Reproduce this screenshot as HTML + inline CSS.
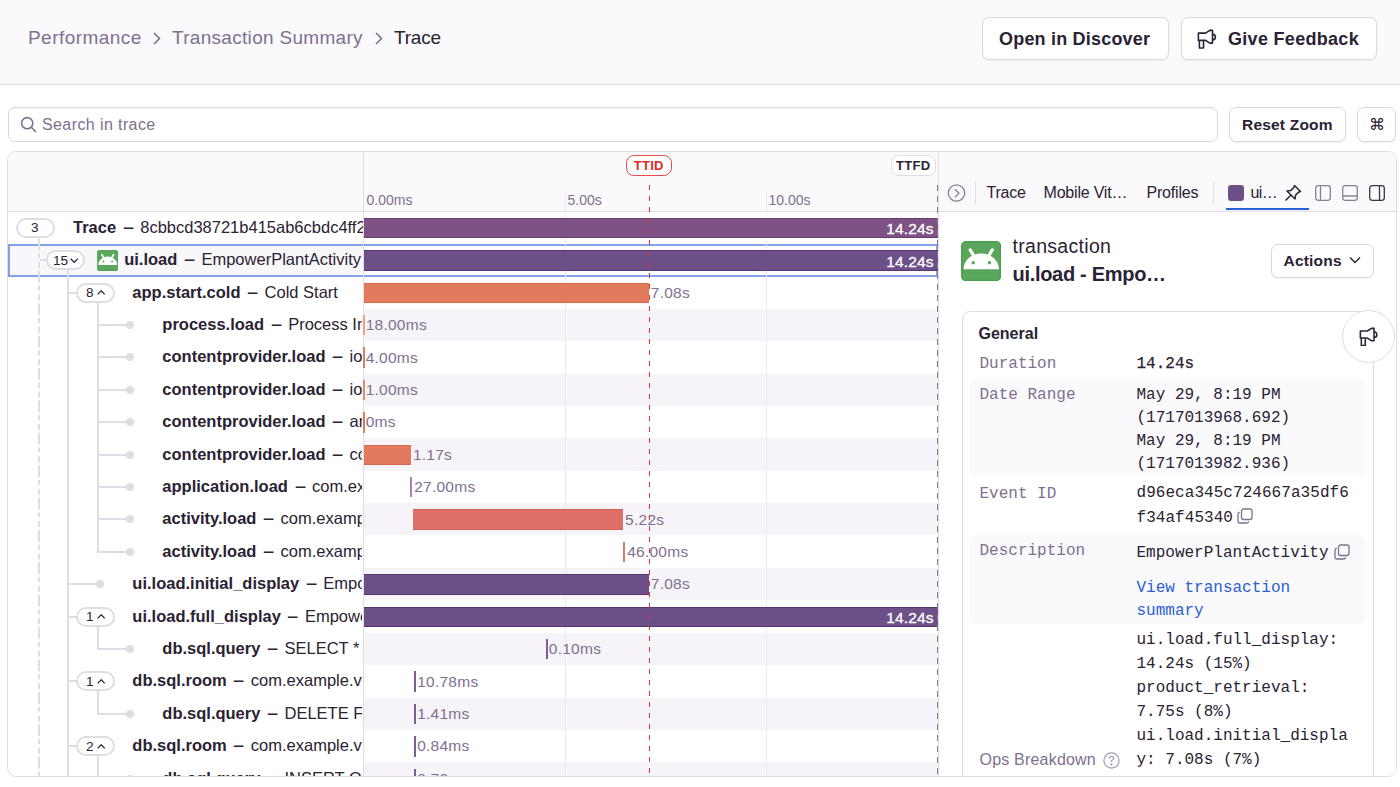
<!DOCTYPE html><html><head><meta charset="utf-8"><style>
*{box-sizing:border-box}
html,body{margin:0;padding:0;width:1400px;height:787px;overflow:hidden;background:#fff;font-family:"Liberation Sans", sans-serif;color:#2B2233}
.a{position:absolute}
.t{position:absolute;white-space:nowrap;line-height:1}
.btn{position:absolute;background:#fff;border:1px solid #DBD6E1;border-radius:7px;box-shadow:0 1px 1px rgba(43,34,51,0.06)}
.badge{position:absolute;height:20px;border:2px solid #E0DCE5;border-radius:10px;background:#fff;font-size:15px;line-height:16px;color:#2B2233}
.vl{position:absolute;width:2px;background:#E0DCE5}
.hl{position:absolute;height:2px;background:#E0DCE5}
.dot{position:absolute;width:8px;height:8px;border-radius:4px;background:#E0DCE5}
.lbl{position:absolute;white-space:nowrap;line-height:1;font-size:15.5px;letter-spacing:0.25px;color:#80708F}
.mono{font-family:"Liberation Mono", monospace}
.dash{display:inline-block;margin:0 7.3px 0 7.6px;transform:translateY(-0.7px) scale(1.06,1.3)}
</style></head><body><div class="a" style="left:0;top:0;width:1400px;height:85px;background:#FAF9FB;border-bottom:1px solid #E0DCE5"></div>
<div class="t" style="left:28px;top:28.3px;font-size:19px;letter-spacing:0.3px;color:#80708F;letter-spacing:0.45px">Performance</div>
<svg class="a" style="left:152px;top:32px" width="10" height="13" viewBox="0 0 10 13" fill="none" stroke="#80708F" stroke-width="1.6"><path d="M2 1L7.5 6.5L2 12"/></svg>
<div class="t" style="left:172px;top:28.3px;font-size:19px;letter-spacing:0.3px;color:#80708F">Transaction Summary</div>
<svg class="a" style="left:374px;top:32px" width="10" height="13" viewBox="0 0 10 13" fill="none" stroke="#80708F" stroke-width="1.6"><path d="M2 1L7.5 6.5L2 12"/></svg>
<div class="t" style="left:394px;top:28.3px;font-size:19px;letter-spacing:-0.2px;color:#2B2233">Trace</div>
<div class="btn" style="left:982px;top:17px;width:187px;height:43px"></div>
<div class="t" style="left:999px;top:30px;font-size:18px;font-weight:bold;letter-spacing:0.2px;color:#2B2233">Open in Discover</div>
<div class="btn" style="left:1181px;top:17px;width:196px;height:43px"></div>
<svg style="position:absolute;left:1197px;top:28.8px" width="20.0" height="20.0" viewBox="0 0 20 20" fill="none" stroke="#2B2233" stroke-width="1.6" stroke-linejoin="round"><path d="M1.4 4.1H8.6L12.8 1.4H15.5V14.1H12.8L8.6 11.4H1.4Z M2.4 11.4V19H6.5V11.4 M15.5 5A2.9 2.9 0 0 1 15.5 10.8"/></svg>
<div class="t" style="left:1228px;top:30px;font-size:18px;font-weight:bold;letter-spacing:0.3px;color:#2B2233">Give Feedback</div>
<div class="btn" style="left:8px;top:107px;width:1210px;height:35px;box-shadow:inset 0 1px 2px rgba(43,34,51,0.04)"></div>
<svg class="a" style="left:20px;top:116px" width="18" height="18" viewBox="0 0 18 18" fill="none" stroke="#80708F" stroke-width="1.6"><circle cx="7.2" cy="7.2" r="5.6"/><path d="M11.3 11.3L16 16"/></svg>
<div class="t" style="left:42px;top:116.7px;font-size:16px;color:#80708F;letter-spacing:0.4px">Search in trace</div>
<div class="btn" style="left:1229px;top:107px;width:117px;height:35px"></div>
<div class="t" style="left:1242px;top:117.2px;font-size:15.5px;letter-spacing:-0.15px;font-weight:bold;letter-spacing:0.2px;color:#2B2233">Reset Zoom</div>
<div class="btn" style="left:1357px;top:107px;width:39px;height:35px"></div>
<div class="t" style="left:1368.5px;top:116.5px;font-size:16px;color:#2B2233">&#8984;</div>
<div class="a" style="left:7px;top:151px;width:1390px;height:626px;border:1.5px solid #E0DCE5;border-radius:9px;overflow:hidden;background:#fff">
<div class="a" style="left:-8.5px;top:-152.5px;width:1400px;height:787px">
<div class="a" style="left:0;top:152px;width:1400px;height:60px;background:#FAF9FB;border-bottom:1.5px solid #E0DCE5"></div>
<div class="a" style="left:364px;top:244.4px;width:574px;height:32.4px;background:#F6F4F8"></div>
<div class="a" style="left:364px;top:309.2px;width:574px;height:32.4px;background:#F6F4F8"></div>
<div class="a" style="left:364px;top:374.0px;width:574px;height:32.4px;background:#F6F4F8"></div>
<div class="a" style="left:364px;top:438.79999999999995px;width:574px;height:32.4px;background:#F6F4F8"></div>
<div class="a" style="left:364px;top:503.59999999999997px;width:574px;height:32.4px;background:#F6F4F8"></div>
<div class="a" style="left:364px;top:568.4px;width:574px;height:32.4px;background:#F6F4F8"></div>
<div class="a" style="left:364px;top:633.2px;width:574px;height:32.4px;background:#F6F4F8"></div>
<div class="a" style="left:364px;top:698.0px;width:574px;height:32.4px;background:#F6F4F8"></div>
<div class="a" style="left:364px;top:762.8px;width:574px;height:32.4px;background:#F6F4F8"></div>
<div class="a" style="left:8px;top:244px;width:930.5px;height:33px;background:#fff;border:2px solid #84A1E8;"></div>
<div class="a" style="left:10px;top:246px;width:353.5px;height:29px;background:#F8F7FA"></div>
<div class="a" style="left:565px;top:192px;width:1px;height:600px;background:#ECE9F0"></div>
<div class="a" style="left:766.5px;top:192px;width:1px;height:600px;background:#ECE9F0"></div>
<div class="a" style="left:363px;top:152px;width:1.5px;height:640px;background:#E0DCE5"></div>
<div class="t" style="left:367px;top:193px;font-size:14px;color:#80708F">0.00ms</div>
<div class="t" style="left:568px;top:193px;font-size:14px;color:#80708F">5.00s</div>
<div class="t" style="left:769px;top:193px;font-size:14px;color:#80708F">10.00s</div>
<div class="a" style="left:38px;top:238px;width:2.4px;height:560px;background:repeating-linear-gradient(to bottom,#E0DCE5 0,#E0DCE5 5.4px,transparent 5.4px,transparent 8.8px,#E0DCE5 8.8px,#E0DCE5 14.2px,transparent 14.2px,transparent 18px,#E0DCE5 18px,#E0DCE5 23.3px,transparent 23.3px,transparent 26.8px,#E0DCE5 26.8px,#E0DCE5 32.4px);background-size:2.4px 32.4px;background-position:0 -26px"></div>
<div class="hl" style="left:40px;top:259.6px;width:7px"></div>
<div class="vl" style="left:67.7px;top:270px;height:520px"></div>
<div class="vl" style="left:97.4px;top:302px;height:251.20000000000005px"></div>
<div class="vl" style="left:97.4px;top:626px;height:24.40000000000009px"></div>
<div class="vl" style="left:97.4px;top:690.8px;height:24.40000000000009px"></div>
<div class="vl" style="left:97.4px;top:755.6px;height:80px"></div>
<div class="hl" style="left:68px;top:292.0px;width:10px"></div>
<div class="hl" style="left:98px;top:324.4px;width:32px"></div>
<div class="dot" style="left:126.7px;top:321.4px"></div>
<div class="hl" style="left:98px;top:356.8px;width:32px"></div>
<div class="dot" style="left:126.7px;top:353.8px"></div>
<div class="hl" style="left:98px;top:389.2px;width:32px"></div>
<div class="dot" style="left:126.7px;top:386.2px"></div>
<div class="hl" style="left:98px;top:421.59999999999997px;width:32px"></div>
<div class="dot" style="left:126.7px;top:418.59999999999997px"></div>
<div class="hl" style="left:98px;top:453.99999999999994px;width:32px"></div>
<div class="dot" style="left:126.7px;top:450.99999999999994px"></div>
<div class="hl" style="left:98px;top:486.4px;width:32px"></div>
<div class="dot" style="left:126.7px;top:483.4px"></div>
<div class="hl" style="left:98px;top:518.8px;width:32px"></div>
<div class="dot" style="left:126.7px;top:515.8px"></div>
<div class="hl" style="left:98px;top:551.2px;width:32px"></div>
<div class="dot" style="left:126.7px;top:548.2px"></div>
<div class="hl" style="left:68px;top:583.6px;width:32px"></div>
<div class="dot" style="left:96.8px;top:580.6px"></div>
<div class="hl" style="left:68px;top:616.0px;width:10px"></div>
<div class="hl" style="left:98px;top:648.4000000000001px;width:32px"></div>
<div class="dot" style="left:126.7px;top:645.4000000000001px"></div>
<div class="hl" style="left:68px;top:680.8px;width:10px"></div>
<div class="hl" style="left:98px;top:713.2px;width:32px"></div>
<div class="dot" style="left:126.7px;top:710.2px"></div>
<div class="hl" style="left:68px;top:745.6px;width:10px"></div>
<div class="hl" style="left:98px;top:778.0px;width:32px"></div>
<div class="dot" style="left:126.7px;top:775.0px"></div>
<div class="badge" style="left:16.7px;top:218.2px;width:39px"></div>
<div class="t" style="left:31.6px;top:221.6px;font-size:13.6px;color:#2B2233">3</div>
<div class="a" style="left:73.5px;top:218.2px;width:289.5px;height:21px;overflow:hidden;white-space:nowrap;font-size:16.5px;line-height:18px;color:#2B2233"><b>Trace</b><span class="dash">–</span>8cbbcd38721b415ab6cbdc4ff2e1a3b9</div>
<div class="badge" style="left:46.5px;top:250.60000000000002px;width:38.5px"></div>
<div class="t" style="left:53.5px;top:254.00000000000003px;font-size:13.6px;color:#2B2233">15</div>
<svg class="a" style="left:70px;top:258.5px" width="8.4" height="5.2" viewBox="0 0 8.4 5.2" fill="none" stroke="#2B2233" stroke-width="1.25"><path d="M0.7 0.8L4.2 4.4L7.7 0.8"/></svg>
<svg style="position:absolute;left:97.3px;top:250.20000000000002px" width="21.3" height="21.3" viewBox="0 0 40 40"><rect x="0.7" y="0.7" width="38.6" height="38.6" rx="4.2" fill="#5AA65C" stroke="#48A04B" stroke-width="1.4"/><path d="M2.5 28A17.65 15.6 0 0 1 37.8 28Z" fill="#fff"/><path d="M9.2 8.9L12.6 14.6M31.1 8.9L27.7 14.6" stroke="#fff" stroke-width="3.2" stroke-linecap="round"/><circle cx="12.1" cy="21.6" r="1.7" fill="#5AA65C"/><circle cx="28.3" cy="21.6" r="1.7" fill="#5AA65C"/></svg>
<div class="a" style="left:124.7px;top:250.60000000000002px;width:238.3px;height:21px;overflow:hidden;white-space:nowrap;font-size:16.5px;line-height:18px;color:#2B2233"><b>ui.load</b><span class="dash">–</span>EmpowerPlantActivity</div>
<div class="badge" style="left:76.5px;top:283.0px;width:38.5px"></div>
<div class="t" style="left:86.4px;top:286.4px;font-size:13.6px;color:#2B2233">8</div>
<svg class="a" style="left:97px;top:290.8px" width="8.4" height="5.2" viewBox="0 0 8.4 5.2" fill="none" stroke="#2B2233" stroke-width="1.25"><path d="M0.7 4.4L4.2 0.8L7.7 4.4"/></svg>
<div class="a" style="left:132.8px;top:283.0px;width:230.2px;height:21px;overflow:hidden;white-space:nowrap;font-size:16.5px;line-height:18px;color:#2B2233"><b>app.start.cold</b><span class="dash">–</span>Cold Start</div>
<div class="a" style="left:162.8px;top:315.4px;width:200.2px;height:21px;overflow:hidden;white-space:nowrap;font-size:16.5px;line-height:18px;color:#2B2233"><b>process.load</b><span class="dash">–</span>Process Initialization</div>
<div class="a" style="left:162.8px;top:347.8px;width:200.2px;height:21px;overflow:hidden;white-space:nowrap;font-size:16.5px;line-height:18px;color:#2B2233"><b>contentprovider.load</b><span class="dash">–</span>io.sentry.android.core.SentryInitProvider</div>
<div class="a" style="left:162.8px;top:380.2px;width:200.2px;height:21px;overflow:hidden;white-space:nowrap;font-size:16.5px;line-height:18px;color:#2B2233"><b>contentprovider.load</b><span class="dash">–</span>io.sentry.android.core.SentryPerformanceProvider</div>
<div class="a" style="left:162.8px;top:412.59999999999997px;width:200.2px;height:21px;overflow:hidden;white-space:nowrap;font-size:16.5px;line-height:18px;color:#2B2233"><b>contentprovider.load</b><span class="dash">–</span>androidx.startup.InitializationProvider</div>
<div class="a" style="left:162.8px;top:444.99999999999994px;width:200.2px;height:21px;overflow:hidden;white-space:nowrap;font-size:16.5px;line-height:18px;color:#2B2233"><b>contentprovider.load</b><span class="dash">–</span>com.example.vu.android.ContentProvider</div>
<div class="a" style="left:162.8px;top:477.4px;width:200.2px;height:21px;overflow:hidden;white-space:nowrap;font-size:16.5px;line-height:18px;color:#2B2233"><b>application.load</b><span class="dash">–</span>com.example.vu.android.MyApplication</div>
<div class="a" style="left:162.8px;top:509.79999999999995px;width:200.2px;height:21px;overflow:hidden;white-space:nowrap;font-size:16.5px;line-height:18px;color:#2B2233"><b>activity.load</b><span class="dash">–</span>com.example.vu.android.MainActivity</div>
<div class="a" style="left:162.8px;top:542.2px;width:200.2px;height:21px;overflow:hidden;white-space:nowrap;font-size:16.5px;line-height:18px;color:#2B2233"><b>activity.load</b><span class="dash">–</span>com.example.vu.android.EmpowerPlantActivity</div>
<div class="a" style="left:132.8px;top:574.6px;width:230.2px;height:21px;overflow:hidden;white-space:nowrap;font-size:16.5px;line-height:18px;color:#2B2233"><b>ui.load.initial_display</b><span class="dash">–</span>EmpowerPlantActivity</div>
<div class="badge" style="left:76.5px;top:607.0px;width:38.5px"></div>
<div class="t" style="left:86.4px;top:610.4px;font-size:13.6px;color:#2B2233">1</div>
<svg class="a" style="left:97px;top:614.8px" width="8.4" height="5.2" viewBox="0 0 8.4 5.2" fill="none" stroke="#2B2233" stroke-width="1.25"><path d="M0.7 4.4L4.2 0.8L7.7 4.4"/></svg>
<div class="a" style="left:132.8px;top:607.0px;width:230.2px;height:21px;overflow:hidden;white-space:nowrap;font-size:16.5px;line-height:18px;color:#2B2233"><b>ui.load.full_display</b><span class="dash">–</span>EmpowerPlantActivity</div>
<div class="a" style="left:162.8px;top:639.4000000000001px;width:200.2px;height:21px;overflow:hidden;white-space:nowrap;font-size:16.5px;line-height:18px;color:#2B2233"><b>db.sql.query</b><span class="dash">–</span>SELECT * FROM products</div>
<div class="badge" style="left:76.5px;top:671.8px;width:38.5px"></div>
<div class="t" style="left:86.4px;top:675.1999999999999px;font-size:13.6px;color:#2B2233">1</div>
<svg class="a" style="left:97px;top:679.5999999999999px" width="8.4" height="5.2" viewBox="0 0 8.4 5.2" fill="none" stroke="#2B2233" stroke-width="1.25"><path d="M0.7 4.4L4.2 0.8L7.7 4.4"/></svg>
<div class="a" style="left:132.8px;top:671.8px;width:230.2px;height:21px;overflow:hidden;white-space:nowrap;font-size:16.5px;line-height:18px;color:#2B2233"><b>db.sql.room</b><span class="dash">–</span>com.example.vu.android.db.dao</div>
<div class="a" style="left:162.8px;top:704.2px;width:200.2px;height:21px;overflow:hidden;white-space:nowrap;font-size:16.5px;line-height:18px;color:#2B2233"><b>db.sql.query</b><span class="dash">–</span>DELETE FROM products</div>
<div class="badge" style="left:76.5px;top:736.6px;width:38.5px"></div>
<div class="t" style="left:86.4px;top:740.0px;font-size:13.6px;color:#2B2233">2</div>
<svg class="a" style="left:97px;top:744.4px" width="8.4" height="5.2" viewBox="0 0 8.4 5.2" fill="none" stroke="#2B2233" stroke-width="1.25"><path d="M0.7 4.4L4.2 0.8L7.7 4.4"/></svg>
<div class="a" style="left:132.8px;top:736.6px;width:230.2px;height:21px;overflow:hidden;white-space:nowrap;font-size:16.5px;line-height:18px;color:#2B2233"><b>db.sql.room</b><span class="dash">–</span>com.example.vu.android.db.dao</div>
<div class="a" style="left:162.8px;top:769.0px;width:200.2px;height:21px;overflow:hidden;white-space:nowrap;font-size:16.5px;line-height:18px;color:#2B2233"><b>db.sql.query</b><span class="dash">–</span>INSERT OR REPLACE INTO products</div>
<div class="a" style="left:364px;top:218.2px;width:574px;height:20.6px;background:#7F5286;border-top:1px solid #6A3C76;border-bottom:1px solid #6A3C76"></div>
<div class="t" style="left:364px;top:221.6px;width:570px;text-align:right;font-size:15.5px;letter-spacing:0.1px;color:#fff;-webkit-text-stroke:0.3px #fff">14.24s</div>
<div class="a" style="left:364px;top:250.60000000000002px;width:574px;height:20.6px;background:#6D5088;border-top:1px solid #563672;border-bottom:1px solid #563672"></div>
<div class="t" style="left:364px;top:254.00000000000003px;width:570px;text-align:right;font-size:15.5px;letter-spacing:0.1px;color:#fff;-webkit-text-stroke:0.3px #fff">14.24s</div>
<div class="a" style="left:364px;top:283.0px;width:285.5px;height:20.6px;background:#E27B5D;border-top:1px solid #D56A4C;border-bottom:1px solid #D56A4C"></div>
<div class="lbl" style="left:651.3000000000001px;top:285.2px">7.08s</div>
<div class="a" style="left:363.5px;top:315.4px;width:1.8px;height:20.6px;background:#E9A08C"></div>
<div class="lbl" style="left:366.20000000000005px;top:317.59999999999997px">18.00ms</div>
<div class="a" style="left:363.5px;top:347.8px;width:1.8px;height:20.6px;background:#E47A5C"></div>
<div class="lbl" style="left:366.20000000000005px;top:350.0px">4.00ms</div>
<div class="a" style="left:363.5px;top:380.2px;width:1.8px;height:20.6px;background:#E58A6E"></div>
<div class="lbl" style="left:366.20000000000005px;top:382.4px">1.00ms</div>
<div class="a" style="left:363.5px;top:412.59999999999997px;width:1.8px;height:20.6px;background:#E47A5C"></div>
<div class="lbl" style="left:366.20000000000005px;top:414.79999999999995px">0ms</div>
<div class="a" style="left:364px;top:444.99999999999994px;width:47px;height:20.6px;background:#E27B5D;border-top:1px solid #D56A4C;border-bottom:1px solid #D56A4C"></div>
<div class="lbl" style="left:413.40000000000003px;top:447.19999999999993px">1.17s</div>
<div class="a" style="left:410.5px;top:477.4px;width:1.8px;height:20.6px;background:#A084AE"></div>
<div class="lbl" style="left:414.70000000000005px;top:479.59999999999997px">27.00ms</div>
<div class="a" style="left:413.2px;top:509.79999999999995px;width:210.3px;height:20.6px;background:#DE6F66;border-top:1px solid #D05E55;border-bottom:1px solid #D05E55"></div>
<div class="lbl" style="left:625.6px;top:511.99999999999994px">5.22s</div>
<div class="a" style="left:623.5px;top:542.2px;width:1.8px;height:20.6px;background:#E07A70"></div>
<div class="lbl" style="left:627.7px;top:544.4000000000001px">46.00ms</div>
<div class="a" style="left:364px;top:574.6px;width:285.5px;height:20.6px;background:#6D5088;border-top:1px solid #563672;border-bottom:1px solid #563672"></div>
<div class="lbl" style="left:651.3000000000001px;top:576.8000000000001px">7.08s</div>
<div class="a" style="left:364px;top:607.0px;width:574px;height:20.6px;background:#6D5088;border-top:1px solid #563672;border-bottom:1px solid #563672"></div>
<div class="t" style="left:364px;top:610.4px;width:570px;text-align:right;font-size:15.5px;letter-spacing:0.1px;color:#fff;-webkit-text-stroke:0.3px #fff">14.24s</div>
<div class="a" style="left:546.5px;top:639.4000000000001px;width:1.8px;height:20.6px;background:#7E5E96"></div>
<div class="lbl" style="left:549.3000000000001px;top:641.6000000000001px">0.10ms</div>
<div class="a" style="left:414.8px;top:671.8px;width:1.8px;height:20.6px;background:#7E5E96"></div>
<div class="lbl" style="left:417.70000000000005px;top:674.0px">10.78ms</div>
<div class="a" style="left:414.8px;top:704.2px;width:1.8px;height:20.6px;background:#7E5E96"></div>
<div class="lbl" style="left:417.70000000000005px;top:706.4000000000001px">1.41ms</div>
<div class="a" style="left:414.8px;top:736.6px;width:1.8px;height:20.6px;background:#7E5E96"></div>
<div class="lbl" style="left:417.70000000000005px;top:738.8000000000001px">0.84ms</div>
<div class="a" style="left:414.8px;top:769.0px;width:1.8px;height:20.6px;background:#7E5E96"></div>
<div class="lbl" style="left:417.70000000000005px;top:771.2px">0.70ms</div>
<div class="a" style="left:649px;top:185px;width:1.3px;height:620px;background:repeating-linear-gradient(to bottom,#E0352B 0,#E0352B 5px,transparent 5px,transparent 11px)"></div>
<div class="a" style="left:626.5px;top:155.2px;width:45.5px;height:21.5px;border:1.5px solid #E4514C;border-radius:8px;background:#fff"></div>
<div class="t" style="left:626.5px;top:159.8px;width:45.5px;text-align:center;font-size:13px;font-weight:bold;letter-spacing:0.3px;color:#DD2C25">TTID</div>
<div class="a" style="left:937px;top:185px;width:1.6px;height:620px;background:repeating-linear-gradient(to bottom,#857A90 0,#857A90 6px,transparent 6px,transparent 11px)"></div>
<div class="a" style="left:891.5px;top:155.5px;width:44.5px;height:21px;border:1.5px solid #E0DCE5;border-radius:8px;background:#fff"></div>
<div class="t" style="left:891.5px;top:159.8px;width:44.5px;text-align:center;font-size:13px;font-weight:bold;letter-spacing:0.3px;color:#2B2233">TTFD</div>
<div class="a" style="left:938px;top:152px;width:1.5px;height:640px;background:#E0DCE5"></div>
<div class="a" style="left:939.5px;top:152px;width:460px;height:60px;background:#FAF9FB;border-bottom:1.5px solid #E0DCE5"></div>
<div class="a" style="left:939.5px;top:212px;width:460px;height:600px;background:#fff"></div>
<svg class="a" style="left:947px;top:183px" width="20" height="20" viewBox="0 0 20 20" fill="none" stroke="#8B7F96" stroke-width="1.3"><circle cx="9.5" cy="10" r="8.2"/><path d="M8 6.2L11.9 10.3L8 14.4"/></svg>
<div class="a" style="left:975px;top:182px;width:1.2px;height:22px;background:#E0DCE5"></div>
<div class="t" style="left:987px;top:185px;font-size:16px;color:#2B2233;letter-spacing:-0.2px">Trace</div>
<div class="t" style="left:1044px;top:185px;font-size:16px;color:#2B2233;letter-spacing:-0.2px">Mobile Vit…</div>
<div class="t" style="left:1147px;top:185px;font-size:16px;color:#2B2233;letter-spacing:-0.2px">Profiles</div>
<div class="a" style="left:1213px;top:182px;width:1.2px;height:22px;background:#E0DCE5"></div>
<div class="a" style="left:1228.5px;top:185px;width:16px;height:16px;border-radius:3px;background:#6D5088"></div>
<div class="t" style="left:1251px;top:185px;font-size:16px;letter-spacing:-0.6px;color:#2B2233">ui…</div>
<svg class="a" style="left:1284px;top:184.2px" width="18" height="18" viewBox="0 0 18 18" fill="none" stroke="#2B2233" stroke-width="1.5" stroke-linejoin="round"><path d="M10.5 1.5L16.5 7.5L14.5 8.2L11.6 11.1L11 15L3 7L6.9 6.4L9.8 3.5Z M6.5 11.5L1.5 16.5"/></svg>
<div class="a" style="left:1226px;top:208px;width:83.5px;height:2.5px;background:#2562D4"></div>
<svg class="a" style="left:1315px;top:185px" width="16" height="16" viewBox="0 0 16 16" fill="none" stroke="#8B7F96" stroke-width="1.3"><rect x="0.7" y="0.7" width="14.6" height="14.6" rx="2.5"/><path d="M5.5 1V15"/></svg>
<svg class="a" style="left:1342px;top:185px" width="16" height="16" viewBox="0 0 16 16" fill="none" stroke="#8B7F96" stroke-width="1.3"><rect x="0.7" y="0.7" width="14.6" height="14.6" rx="2.5"/><path d="M1 11H15"/></svg>
<svg class="a" style="left:1369px;top:185px" width="16" height="16" viewBox="0 0 16 16" fill="none" stroke="#3E3446" stroke-width="1.3"><rect x="0.7" y="0.7" width="14.6" height="14.6" rx="2.5"/><path d="M10.5 1V15"/></svg>
<svg style="position:absolute;left:961.8px;top:241.4px" width="40.2" height="40.2" viewBox="0 0 40 40"><rect x="0.7" y="0.7" width="38.6" height="38.6" rx="4.2" fill="#5AA65C" stroke="#48A04B" stroke-width="1.4"/><path d="M2.5 28A17.65 15.6 0 0 1 37.8 28Z" fill="#fff"/><path d="M9.2 8.9L12.6 14.6M31.1 8.9L27.7 14.6" stroke="#fff" stroke-width="3.2" stroke-linecap="round"/><circle cx="12.1" cy="21.6" r="1.7" fill="#5AA65C"/><circle cx="28.3" cy="21.6" r="1.7" fill="#5AA65C"/></svg>
<div class="t" style="left:1013px;top:237px;font-size:19.5px;color:#2B2233;letter-spacing:0.3px">transaction</div>
<div class="t" style="left:1013px;top:264px;font-size:20px;font-weight:bold;color:#2B2233;letter-spacing:-0.3px">ui.load - Empo…</div>
<div class="btn" style="left:1271.5px;top:244px;width:102.5px;height:34px"></div>
<div class="t" style="left:1284px;top:253px;font-size:15.5px;font-weight:bold;color:#2B2233;letter-spacing:0.2px">Actions</div>
<svg class="a" style="left:1349px;top:256px" width="12" height="8" viewBox="0 0 12 8" fill="none" stroke="#2B2233" stroke-width="1.4"><path d="M1 1.5L6 6.5L11 1.5"/></svg>
<div class="a" style="left:962px;top:311px;width:412px;height:480px;border:1.5px solid #E0DCE5;border-radius:8px;background:#fff"></div>
<div class="t" style="left:979px;top:326px;font-size:16px;font-weight:bold;color:#2B2233">General</div>
<div class="a" style="left:970.5px;top:379px;width:394.5px;height:97.5px;background:#FAF9FB;border-radius:6px"></div>
<div class="a" style="left:970.5px;top:535px;width:394.5px;height:89px;background:#FAF9FB;border-radius:6px"></div>
<div class="a" style="left:980px;top:353px;font-family:'Liberation Mono',monospace;font-size:16px;line-height:23px;color:#80708F;white-space:nowrap">Duration</div>
<div class="a" style="left:1137px;top:353px;font-family:'Liberation Mono',monospace;font-size:16px;line-height:23px;color:#2B2233;-webkit-text-stroke:0.25px #2B2233;white-space:nowrap">14.24s</div>
<div class="a" style="left:980px;top:384px;font-family:'Liberation Mono',monospace;font-size:16px;line-height:23px;color:#80708F;white-space:nowrap">Date Range</div>
<div class="a" style="left:1137px;top:384px;font-family:'Liberation Mono',monospace;font-size:16px;line-height:23px;color:#2B2233;white-space:pre">May 29, 8:19 PM
(1717013968.692)
May 29, 8:19 PM
(1717013982.936)</div>
<div class="a" style="left:980px;top:483px;font-family:'Liberation Mono',monospace;font-size:16px;line-height:23px;color:#80708F;white-space:nowrap">Event ID</div>
<div class="a" style="left:1137px;top:481.2px;font-family:'Liberation Mono',monospace;font-size:16px;line-height:23px;line-height:25px;letter-spacing:0.05px;color:#2B2233;white-space:pre">d96eca345c724667a35df6
f34af45340</div>
<svg class="a" style="left:1237px;top:508px" width="16" height="16" viewBox="0 0 16 16" fill="none" stroke="#80708F" stroke-width="1.3"><rect x="4.5" y="1" width="10.5" height="10.5" rx="2"/><path d="M2.8 4.5H2.5Q1 4.5 1 6V13.5Q1 15 2.5 15H10Q11.5 15 11.5 13.5V13.2"/></svg>
<div class="a" style="left:980px;top:540px;font-family:'Liberation Mono',monospace;font-size:16px;line-height:23px;color:#80708F;white-space:nowrap">Description</div>
<div class="a" style="left:1137px;top:542.5px;font-family:'Liberation Mono',monospace;font-size:16px;line-height:23px;color:#2B2233;white-space:nowrap">EmpowerPlantActivity</div>
<svg class="a" style="left:1334px;top:544px" width="16" height="16" viewBox="0 0 16 16" fill="none" stroke="#80708F" stroke-width="1.3"><rect x="4.5" y="1" width="10.5" height="10.5" rx="2"/><path d="M2.8 4.5H2.5Q1 4.5 1 6V13.5Q1 15 2.5 15H10Q11.5 15 11.5 13.5V13.2"/></svg>
<div class="a" style="left:1137px;top:577px;font-family:'Liberation Mono',monospace;font-size:16px;line-height:23px;color:#2B5FD3;white-space:pre">View transaction
summary</div>
<div class="a" style="left:1137px;top:628.5px;font-family:'Liberation Mono',monospace;font-size:16px;line-height:23px;line-height:24px;color:#2B2233;white-space:pre">ui.load.full_display:
14.24s (15%)
product_retrieval:
7.75s (8%)
ui.load.initial_displa
y: 7.08s (7%)</div>
<div class="t" style="left:980px;top:752px;font-size:16px;letter-spacing:0.2px;color:#80708F">Ops Breakdown</div>
<svg class="a" style="left:1103.5px;top:752px" width="17" height="17" viewBox="0 0 17 17" fill="none" stroke="#A39AAE" stroke-width="1.2"><circle cx="8.5" cy="8.5" r="7.6"/><path d="M6.3 6.5Q6.3 4.4 8.5 4.4Q10.7 4.4 10.7 6.3Q10.7 7.6 8.5 8.6V10"/><circle cx="8.5" cy="12.4" r="0.5" fill="#A39AAE"/></svg>
<div class="a" style="left:1342px;top:310px;width:53px;height:53px;border-radius:27px;border:1.5px solid #E0DCE5;background:#fff"></div>
<svg style="position:absolute;left:1359px;top:327px" width="19.4" height="19.4" viewBox="0 0 20 20" fill="none" stroke="#2B2233" stroke-width="1.6" stroke-linejoin="round"><path d="M1.4 4.1H8.6L12.8 1.4H15.5V14.1H12.8L8.6 11.4H1.4Z M2.4 11.4V19H6.5V11.4 M15.5 5A2.9 2.9 0 0 1 15.5 10.8"/></svg>
</div></div></body></html>
